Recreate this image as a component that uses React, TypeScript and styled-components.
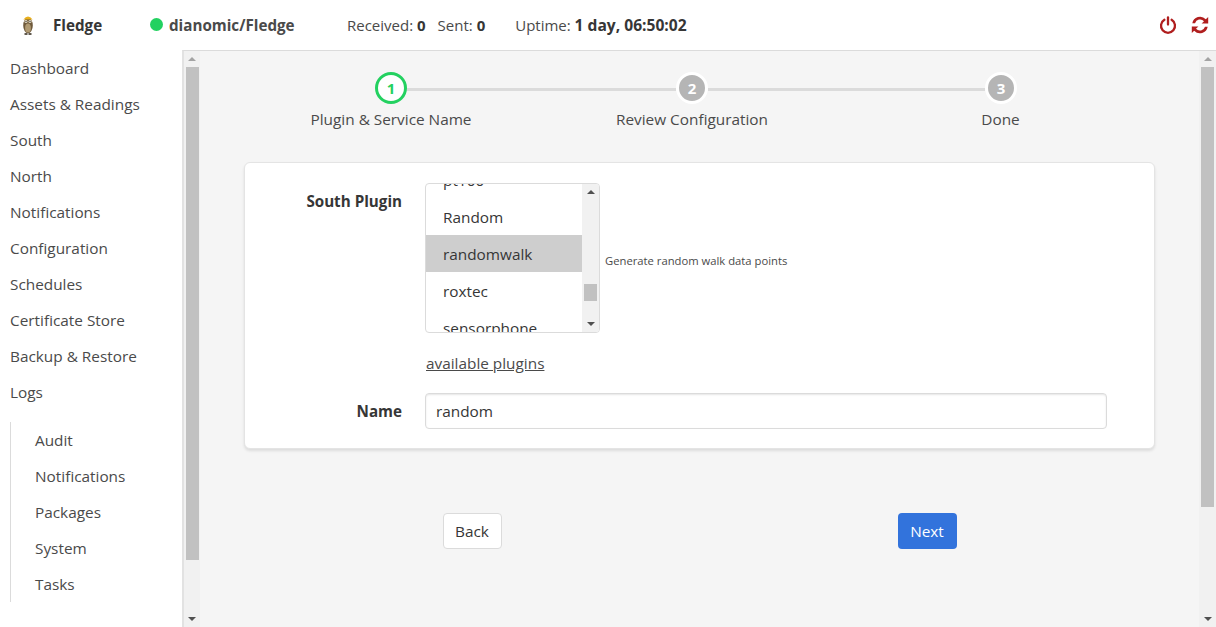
import React from 'react'
import styled, { createGlobalStyle } from 'styled-components'

const GlobalStyle = createGlobalStyle`
  html, body {
    margin: 0;
    padding: 0;
    height: 100%;
    overflow: hidden;
    background: #fff;
  }
  body {
    font-family: "Open Sans", "Noto Sans", sans-serif;
    font-size: 15.35px;
    color: #4a4a4a;
  }
`

const Page = styled.div`
  display: flex;
  flex-direction: column;
  width: 1216px;
  height: 627px;
`

const TopBar = styled.header`
  display: flex;
  align-items: center;
  height: 50px;
  flex-shrink: 0;
  padding: 0 7px 1px 17px;
  box-sizing: border-box;
`

const Brand = styled.div`
  display: flex;
  align-items: center;
  width: 133px;
  font-weight: 700;
  font-size: 15.2px;
  color: #363636;
  gap: 14px;
`

const Repo = styled.div`
  display: flex;
  align-items: center;
  gap: 6px;
  width: 197px;
  font-weight: 700;
  font-size: 15.2px;
  color: #4a4a4a;
`

const Dot = styled.span`
  width: 13px;
  height: 13px;
  border-radius: 50%;
  background: #23d160;
`

const Stat = styled.span<{ $gap?: number }>`
  font-size: 15px;
  margin-right: ${p => p.$gap ?? 12}px;
  b {
    font-weight: 700;
    color: #363636;
  }
`

const Uptime = styled(Stat)`
  b {
    font-size: 15.6px;
  }
`

const Actions = styled.div`
  display: flex;
  align-items: center;
  gap: 14px;
  margin-left: auto;
  color: #b01e1e;
`

const Body = styled.div`
  display: flex;
  flex: 1;
  min-height: 0;
`

const Sidebar = styled.nav`
  width: 182px;
  flex-shrink: 0;
  padding-left: 10px;
  box-sizing: border-box;
`

const NavItem = styled.div`
  height: 36px;
  line-height: 36px;
  font-size: 15.35px;
  color: #4a4a4a;
`

const SubNav = styled.div`
  margin-top: 12px;
  border-left: 1px solid #dbdbdb;
  padding-left: 24px;
`

const Main = styled.div`
  flex: 1;
  display: flex;
  background: #f5f5f5;
  border-top: 1px solid #dbdbdb;
  border-left: 2px solid #e2e2e2;
  min-width: 0;
`

const Scrollbar = styled.div<{ $width?: number }>`
  display: flex;
  flex-direction: column;
  width: ${p => p.$width ?? 17}px;
  flex-shrink: 0;
  background: #f1f1f1;
`

const ArrowButton = styled.div<{ $up?: boolean; $dark?: boolean }>`
  display: flex;
  align-items: center;
  justify-content: center;
  height: 16px;
  width: 100%;
  flex-shrink: 0;
  &::before {
    content: '';
    border-left: 4px solid transparent;
    border-right: 4px solid transparent;
    ${p => (p.$up ? 'border-bottom' : 'border-top')}: 4px solid ${p => (p.$dark ? '#505050' : '#a3a3a3')};
  }
`

const Track = styled.div`
  flex: 1;
  width: 100%;
`

const Thumb = styled.div<{ $height: number; $top?: number }>`
  width: 13px;
  margin: ${p => p.$top ?? 0}px 0 0 2px;
  height: ${p => p.$height}px;
  background: #c1c1c1;
`

const Content = styled.main`
  flex: 1;
  min-width: 0;
  display: flex;
  flex-direction: column;
  align-items: center;
  padding-top: 21px;
`

const StepsWrap = styled.div`
  display: flex;
  flex-direction: column;
  width: 100%;
`

const StepLine = styled.div<{ $width: number }>`
  width: ${p => p.$width}px;
  height: 3px;
  margin-top: 3px;
  background: #dbdbdb;
`

const StepTrack = styled.div`
  display: flex;
  align-items: center;
  padding-left: 175px;
  height: 32px;
`

const Marker = styled.span<{ $active?: boolean }>`
  display: flex;
  align-items: center;
  justify-content: center;
  width: 32px;
  height: 32px;
  box-sizing: border-box;
  flex-shrink: 0;
  border-radius: 50%;
  font-weight: 700;
  font-size: 15px;
  background: ${p => (p.$active ? '#fff' : '#b5b5b5')};
  color: ${p => (p.$active ? '#23d160' : '#fff')};
  border: 3px solid ${p => (p.$active ? '#23d160' : '#fff')};
`

const StepLabels = styled.div`
  display: flex;
  margin-top: 4px;
  padding-left: 108px;
  font-size: 15.35px;
  line-height: 22px;
  color: #4a4a4a;
`

const StepLabel = styled.span<{ $width: number }>`
  width: ${p => p.$width}px;
  flex-shrink: 0;
  text-align: center;
`

const Card = styled.section`
  width: 911px;
  margin-top: 32px;
  height: 287px;
  box-sizing: border-box;
  background: #fff;
  border-radius: 6px;
  border: 1px solid #e4e4e4;
  box-shadow: 0 2px 3px rgba(10, 10, 10, 0.1);
  padding: 20px 0 0 0;
`

const FieldRow = styled.div`
  display: flex;
  align-items: flex-start;
`

const FieldLabel = styled.label`
  width: 157px;
  text-align: right;
  font-weight: 700;
  font-size: 15.2px;
  color: #363636;
  line-height: 36px;
  flex-shrink: 0;
  margin-right: 23px;
`

const ListBox = styled.div`
  display: flex;
  width: 175px;
  height: 150px;
  box-sizing: border-box;
  border: 1px solid #dbdbdb;
  border-radius: 4px;
  overflow: hidden;
  flex-shrink: 0;
`

const Options = styled.div`
  flex: 1;
  overflow: hidden;
  min-width: 0;
`

const OptionList = styled.div`
  margin-top: -23px;
`

const Option = styled.div<{ $selected?: boolean }>`
  height: 37px;
  line-height: 39px;
  padding-left: 17px;
  font-size: 15.35px;
  color: #363636;
  background: ${p => (p.$selected ? '#cecece' : 'transparent')};
`

const PluginHint = styled.span`
  margin: 70px 0 0 5px;
  font-size: 11.25px;
  line-height: 16px;
  color: #4a4a4a;
`

const PluginsLink = styled.a`
  display: block;
  margin: 19px 0 0 181px;
  height: 22px;
  line-height: 22px;
  font-size: 15.35px;
  color: #4a4a4a;
  text-decoration: underline;
`

const NameRow = styled(FieldRow)`
  margin-top: 19px;
`

const TextInput = styled.input`
  width: 682px;
  height: 36px;
  box-sizing: border-box;
  padding: 0 10px;
  border: 1px solid #dbdbdb;
  border-radius: 4px;
  font-family: inherit;
  font-size: 15.35px;
  color: #363636;
  box-shadow: inset 0 1px 2px rgba(10, 10, 10, 0.1);
  outline: none;
`

const Buttons = styled.div`
  display: flex;
  justify-content: space-between;
  width: 514px;
  margin-top: 64px;
`

const Button = styled.button<{ $primary?: boolean }>`
  height: 36px;
  width: 59px;
  padding: 0;
  border-radius: 4px;
  font-family: inherit;
  font-size: 15.35px;
  border: 1px solid ${p => (p.$primary ? 'transparent' : '#dbdbdb')};
  background: ${p => (p.$primary ? '#3273dc' : '#fff')};
  color: ${p => (p.$primary ? '#fff' : '#363636')};
`

const navItems = ['Dashboard', 'Assets & Readings', 'South', 'North', 'Notifications', 'Configuration', 'Schedules', 'Certificate Store', 'Backup & Restore', 'Logs']
const logItems = ['Audit', 'Notifications', 'Packages', 'System', 'Tasks']
const plugins = ['pt100', 'Random', 'randomwalk', 'roxtec', 'sensorphone']

function Owl() {
  return (
    <svg width="22" height="24" viewBox="0 0 22 24">
      <ellipse cx="11" cy="12.5" rx="4.8" ry="7.8" fill="#6f5a3c" />
      <ellipse cx="11" cy="15" rx="2.9" ry="4.6" fill="#b09a72" />
      <path d="M6.4 6.5 Q11 .5 15.6 6.5 Z" fill="#eab01c" />
      <circle cx="9" cy="8.6" r="1.5" fill="#e9dfc8" />
      <circle cx="13" cy="8.6" r="1.5" fill="#e9dfc8" />
      <circle cx="9" cy="8.6" r=".7" fill="#222" />
      <circle cx="13" cy="8.6" r=".7" fill="#222" />
      <path d="M7.5 21h3M11.5 21h3" stroke="#2e2414" strokeWidth="1.4" />
    </svg>
  )
}

function PowerIcon() {
  return (
    <svg width="18" height="18" viewBox="0 0 18 18" fill="none" stroke="currentColor" strokeWidth="2.3" strokeLinecap="round">
      <path d="M5.4 3.8a7 7 0 1 0 7.2 0" />
      <path d="M9 1.5v7" />
    </svg>
  )
}

function SyncIcon() {
  return (
    <svg width="18" height="18" viewBox="0 0 18 18" fill="currentColor">
      <path d="M17.2 1v6.6h-6.6l2.4-2.4A5.3 5.3 0 0 0 4 7.2H1.3a7.9 7.9 0 0 1 13.5-4Z" />
      <path d="M.8 17v-6.6h6.6L5 12.8A5.3 5.3 0 0 0 14 10.8h2.7a7.9 7.9 0 0 1-13.5 4Z" />
    </svg>
  )
}

function App() {
  return (
    <Page>
      <GlobalStyle />
      <TopBar>
        <Brand>
          <Owl />
          Fledge
        </Brand>
        <Repo>
          <Dot />
          dianomic/Fledge
        </Repo>
        <Stat>Received: <b>0</b></Stat>
        <Stat $gap={30}>Sent: <b>0</b></Stat>
        <Uptime>Uptime: <b>1 day, 06:50:02</b></Uptime>
        <Actions>
          <PowerIcon />
          <SyncIcon />
        </Actions>
      </TopBar>
      <Body>
        <Sidebar>
          {navItems.map(item => <NavItem key={item}>{item}</NavItem>)}
          <SubNav>
            {logItems.map(item => <NavItem key={item}>{item}</NavItem>)}
          </SubNav>
        </Sidebar>
        <Main>
          <Scrollbar $width={16}>
            <ArrowButton $up />
            <Track><Thumb $height={493} /></Track>
            <ArrowButton $dark />
          </Scrollbar>
          <Content>
            <StepsWrap>
              <StepTrack>
                <Marker $active>1</Marker>
                <StepLine $width={269} />
                <Marker>2</Marker>
                <StepLine $width={277} />
                <Marker>3</Marker>
              </StepTrack>
              <StepLabels>
                <StepLabel $width={166}>Plugin &amp; Service Name</StepLabel>
                <StepLabel $width={436}>Review Configuration</StepLabel>
                <StepLabel $width={181}>Done</StepLabel>
              </StepLabels>
            </StepsWrap>
            <Card>
              <FieldRow>
                <FieldLabel>South Plugin</FieldLabel>
                <ListBox>
                  <Options>
                    <OptionList>
                      {plugins.map(name => (
                        <Option key={name} $selected={name === 'randomwalk'}>{name}</Option>
                      ))}
                    </OptionList>
                  </Options>
                  <Scrollbar>
                    <ArrowButton $up $dark />
                    <Track><Thumb $height={17} $top={84} /></Track>
                    <ArrowButton $dark />
                  </Scrollbar>
                </ListBox>
                <PluginHint>Generate random walk data points</PluginHint>
              </FieldRow>
              <PluginsLink>available plugins</PluginsLink>
              <NameRow>
                <FieldLabel>Name</FieldLabel>
                <TextInput defaultValue="random" />
              </NameRow>
            </Card>
            <Buttons>
              <Button>Back</Button>
              <Button $primary>Next</Button>
            </Buttons>
          </Content>
          <Scrollbar>
            <ArrowButton $up />
            <Track><Thumb $height={440} /></Track>
            <ArrowButton $dark />
          </Scrollbar>
        </Main>
      </Body>
    </Page>
  )
}

export default App
